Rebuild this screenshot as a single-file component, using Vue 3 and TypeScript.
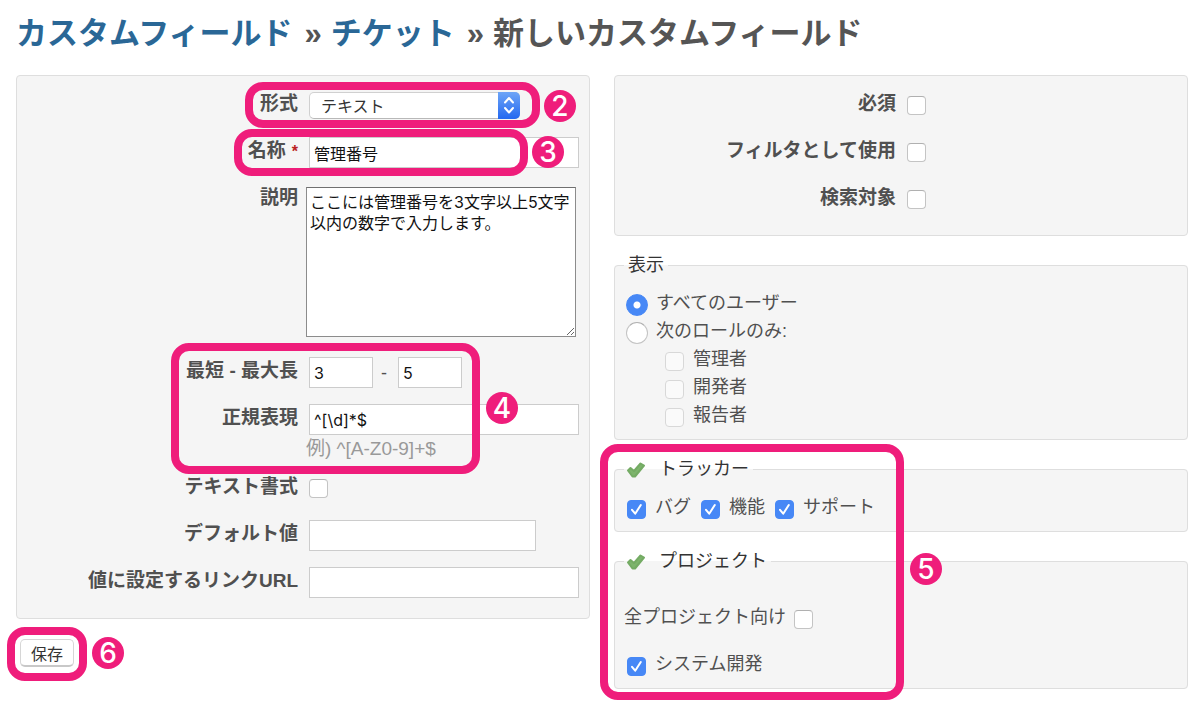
<script setup lang="ts">
import { ref } from 'vue'

interface Option {
  id: string
  label: string
  checked: boolean
}

const format = ref('string')
const name = ref('管理番号')
const description = ref('ここには管理番号を3文字以上5文字以内の数字で入力します。')
const minLength = ref('3')
const maxLength = ref('5')
const regexp = ref('^[\\d]*$')
const textFormatting = ref(false)
const defaultValue = ref('')
const urlPattern = ref('')
const visibility = ref('all')
const forAll = ref(false)

const flags = ref<Option[]>([
  { id: 'required', label: '必須', checked: false },
  { id: 'filter', label: 'フィルタとして使用', checked: false },
  { id: 'searchable', label: '検索対象', checked: false },
])
const roles = ref<Option[]>([
  { id: 'manager', label: '管理者', checked: false },
  { id: 'developer', label: '開発者', checked: false },
  { id: 'reporter', label: '報告者', checked: false },
])
const trackers = ref<Option[]>([
  { id: 'bug', label: 'バグ', checked: true },
  { id: 'feature', label: '機能', checked: true },
  { id: 'support', label: 'サポート', checked: true },
])
const projects = ref<Option[]>([{ id: 'system', label: 'システム開発', checked: true }])
</script>

<template>
  <main class="page">
    <h2 class="title">
      <a href="#fields">カスタムフィールド</a><span class="sep">»</span><a href="#issues">チケット</a><span class="sep">»</span>新しいカスタムフィールド
    </h2>

    <form class="columns" @submit.prevent>
      <div class="column">
        <section class="box tabular">
          <div class="row">
            <label for="format">形式</label>
            <div class="field">
              <span class="select-wrap">
                <select id="format" v-model="format">
                  <option value="string">テキスト</option>
                </select>
                <span class="select-arrows">
                  <svg viewBox="0 0 22 26" width="22" height="26" aria-hidden="true">
                    <path d="M7 10.500l4-4.500 4 4.500M7 16l4 4.500 4-4.500" />
                  </svg>
                </span>
              </span>
            </div>
            <span class="ring ring-format"></span>
            <span class="badge badge-format">2</span>
          </div>

          <div class="row">
            <label for="name">名称<span class="required">*</span></label>
            <div class="field"><input id="name" v-model="name" type="text" class="wide" /></div>
            <span class="ring ring-name"></span>
            <span class="badge badge-name">3</span>
          </div>

          <div class="row row-area">
            <label for="description">説明</label>
            <div class="field"><textarea id="description" v-model="description"></textarea></div>
          </div>

          <div class="group">
            <div class="row">
              <label for="min">最短 - 最大長</label>
              <div class="field">
                <input id="min" v-model="minLength" type="text" class="short" />
                <span class="dash">-</span>
                <input v-model="maxLength" type="text" class="short" aria-label="最大長" />
              </div>
            </div>
            <div class="row row-hint">
              <label for="regexp">正規表現</label>
              <div class="field">
                <input id="regexp" v-model="regexp" type="text" class="wide" />
                <em class="hint">例) ^[A-Z0-9]+$</em>
              </div>
            </div>
            <span class="ring ring-length"></span>
            <span class="badge badge-length">4</span>
          </div>

          <div class="row">
            <label for="formatting">テキスト書式</label>
            <div class="field"><input id="formatting" v-model="textFormatting" type="checkbox" /></div>
          </div>
          <div class="row">
            <label for="default">デフォルト値</label>
            <div class="field"><input id="default" v-model="defaultValue" type="text" class="medium" /></div>
          </div>
          <div class="row">
            <label for="url">値に設定するリンクURL</label>
            <div class="field"><input id="url" v-model="urlPattern" type="text" class="wide" /></div>
          </div>
        </section>

        <div class="actions">
          <button type="submit">保存</button>
          <span class="ring ring-save"></span>
          <span class="badge badge-save">6</span>
        </div>
      </div>

      <div class="column">
        <section class="box tabular">
          <div v-for="flag in flags" :key="flag.id" class="row">
            <label :for="flag.id">{{ flag.label }}</label>
            <div class="field"><input :id="flag.id" v-model="flag.checked" type="checkbox" /></div>
          </div>
        </section>

        <fieldset class="box">
          <legend>表示</legend>
          <label class="line"><input v-model="visibility" type="radio" value="all" />すべてのユーザー</label>
          <label class="line"><input v-model="visibility" type="radio" value="roles" />次のロールのみ:</label>
          <label v-for="role in roles" :key="role.id" class="line nested">
            <input v-model="role.checked" type="checkbox" :disabled="visibility === 'all'" />{{ role.label }}
          </label>
        </fieldset>

        <div class="group">
          <fieldset class="box">
            <legend>
              <svg class="tick" viewBox="0 0 20 18" width="20" height="18" aria-hidden="true">
                <path d="M2 9.500L4.500 7l3.500 3L14.500 2.500l3.500 2L9 15.500H6.500z" />
              </svg>トラッカー
            </legend>
            <div class="inline">
              <label v-for="tracker in trackers" :key="tracker.id" class="line">
                <input v-model="tracker.checked" type="checkbox" />{{ tracker.label }}
              </label>
            </div>
          </fieldset>

          <fieldset class="box">
            <legend>
              <svg class="tick" viewBox="0 0 20 18" width="20" height="18" aria-hidden="true">
                <path d="M2 9.500L4.500 7l3.500 3L14.500 2.500l3.500 2L9 15.500H6.500z" />
              </svg>プロジェクト
            </legend>
            <div class="projects">
              <label class="line after">全プロジェクト向け<input v-model="forAll" type="checkbox" /></label>
              <label v-for="project in projects" :key="project.id" class="line">
                <input v-model="project.checked" type="checkbox" />{{ project.label }}
              </label>
            </div>
          </fieldset>
          <span class="ring ring-targets"></span>
          <span class="badge badge-targets">5</span>
        </div>
      </div>
    </form>
  </main>
</template>

<style>
body {
  margin: 0;
  background: #fff;
}
</style>

<style scoped>
.page {
  box-sizing: border-box;
  padding: 12px 12px 26px 16px;
  color: #505050;
  font-family: "Liberation Sans", "Noto Sans CJK JP", sans-serif;
  font-size: 18px;
  line-height: 28px;
}
.page *,
.page *::before,
.page *::after {
  box-sizing: border-box;
}
.title {
  margin: 0 0 19px;
  font-size: 31px;
  line-height: 44px;
  font-weight: 700;
  color: #555;
}
.title a {
  color: #2a6796;
  text-decoration: none;
}
.sep {
  margin: 0 9px 0 12px;
}
.columns {
  display: grid;
  grid-template-columns: 1fr 1fr;
  gap: 24px;
  align-items: start;
}
.column {
  min-width: 0;
}
.box {
  min-width: 0;
  margin: 0 0 16px;
  border: 1px solid #dedede;
  border-radius: 4px;
  background: #f5f5f5;
}
.tabular {
  padding: 6px 0 12px;
}
.row {
  position: relative;
  display: flex;
  padding: 8px 0;
}
.row > label {
  flex: none;
  width: 281px;
  text-align: right;
  font-size: 19px;
  font-weight: 700;
}
.required {
  margin-left: 6px;
  font-size: 16px;
  color: #b22;
}
.field {
  flex: 1;
  min-width: 0;
  min-height: 31px;
  display: flex;
  flex-wrap: wrap;
  align-items: center;
  padding-left: 8px;
}
.row-area {
  padding: 11px 0 12px;
}
.row-area > label {
  margin-top: -3px;
}
.row-hint {
  padding-bottom: 2px;
}
input,
select,
textarea,
button {
  font-family: Inter, "Noto Sans CJK JP", sans-serif;
  font-size: 16px;
  color: #111;
}
input[type="text"] {
  height: 31px;
  margin: 0 0 0 3px;
  padding: 0 4px;
  border: 1px solid #ccc;
  border-radius: 0;
  background: #fff;
}
.wide {
  width: 270px;
}
.medium {
  width: 227px;
}
.short {
  width: 64px;
}
.dash {
  width: 22px;
  text-align: center;
}
textarea {
  display: block;
  width: 270px;
  height: 150px;
  margin: 0;
  padding: 4px 3px;
  border: 1px solid #8c8c8c;
  border-top-color: #707070;
  border-radius: 0;
  background: #fff;
  line-height: 21px;
}
.hint {
  flex-basis: 100%;
  font-size: 19px;
  font-style: normal;
  color: #999;
}
.select-wrap {
  position: relative;
  display: flex;
  margin-left: 3px;
}
select {
  appearance: none;
  width: 211px;
  height: 27px;
  margin: 0;
  padding: 0 30px 0 11px;
  border: 1px solid #d0d0d0;
  border-bottom-color: #b8b8b8;
  border-radius: 5px;
  background: #fff;
  color: #333;
}
.select-arrows {
  position: absolute;
  top: 0;
  right: 0;
  display: flex;
  width: 22px;
  height: 27px;
  border-radius: 0 5px 5px 0;
  background: linear-gradient(#6ea5f7, #2468f0);
  pointer-events: none;
}
.select-arrows path {
  fill: none;
  stroke: #fff;
  stroke-width: 2;
  stroke-linecap: round;
  stroke-linejoin: round;
}
input[type="checkbox"],
input[type="radio"] {
  appearance: none;
  flex: none;
  width: 19px;
  height: 19px;
  margin: 0 0 0 3px;
  border: 1px solid #c4c4c4;
  border-top-color: #b0b0b0;
  border-radius: 4px;
  background: #fff;
}
input[type="checkbox"]:disabled {
  border-color: #d8d8d8;
  background: #fafafa;
}
input[type="checkbox"]:checked {
  border-color: #4788f6;
  background: #4788f6 url("data:image/svg+xml,%3Csvg xmlns='http://www.w3.org/2000/svg' viewBox='0 0 17 17'%3E%3Cpath d='M4 8.800l3.200 3.900L12.800 4' fill='none' stroke='white' stroke-width='2' stroke-linecap='round' stroke-linejoin='round'/%3E%3C/svg%3E") center / 17px 17px no-repeat;
}
input[type="radio"] {
  width: 22px;
  height: 22px;
  border-radius: 50%;
}
input[type="radio"]:checked {
  border-color: #4788f6;
  background: radial-gradient(circle, #fff 0 3px, #4788f6 4px);
}
fieldset.box {
  padding: 11px 9px 10px;
}
legend {
  display: flex;
  align-items: center;
  height: 26px;
  padding: 0 4px;
  color: #333;
}
.tick {
  margin: 2px 13px 0 -2px;
}
.tick path {
  fill: #7db46c;
  stroke: #74ab64;
  stroke-width: 2;
  stroke-linejoin: round;
}
.line {
  display: flex;
  align-items: center;
  height: 28px;
}
.line input[type="checkbox"] {
  margin: 4px 9px 0 3px;
}
.line input[type="radio"] {
  margin: 4px 8px 0 2px;
}
.line.after input[type="checkbox"] {
  margin-left: 8px;
}
.nested {
  padding-left: 38px;
}
.inline {
  display: flex;
  gap: 7px;
}
.projects {
  display: flex;
  flex-direction: column;
  gap: 19px;
  padding-top: 18px;
}
.actions {
  position: relative;
  display: flex;
  padding: 4px 4px 0;
}
button {
  width: 54px;
  height: 28px;
  padding: 0;
  border: 1px solid #d6d6d6;
  border-bottom: 2px solid #c8c8c8;
  border-radius: 5px;
  background: #fff;
  color: #333;
}
.group {
  position: relative;
}
.ring {
  position: absolute;
  z-index: 1;
  border: 8px solid #ef1d7b;
  border-radius: 18px;
  pointer-events: none;
}
.badge {
  position: absolute;
  z-index: 2;
  width: 32px;
  height: 32px;
  border-radius: 50%;
  background: #ef1d7b;
  color: #fff;
  font-family: Inter, sans-serif;
  font-size: 28px;
  font-weight: 500;
  line-height: 32px;
  text-align: center;
}
.ring-format {
  top: 0;
  left: 228px;
  width: 295px;
  height: 46px;
}
.badge-format {
  top: 8px;
  left: 527px;
}
.ring-name {
  top: 0;
  left: 217px;
  width: 294px;
  height: 47px;
}
.badge-name {
  top: 7px;
  left: 515px;
}
.ring-length {
  top: -6px;
  left: 154px;
  width: 309px;
  height: 131px;
}
.badge-length {
  top: 43px;
  left: 469px;
}
.ring-targets {
  top: -12px;
  left: -14px;
  width: 304px;
  height: 256px;
}
.badge-targets {
  top: 97px;
  left: 296px;
}
.ring-save {
  top: -8px;
  left: -9px;
  width: 80px;
  height: 54px;
}
.badge-save {
  top: 2px;
  left: 76px;
}
</style>
